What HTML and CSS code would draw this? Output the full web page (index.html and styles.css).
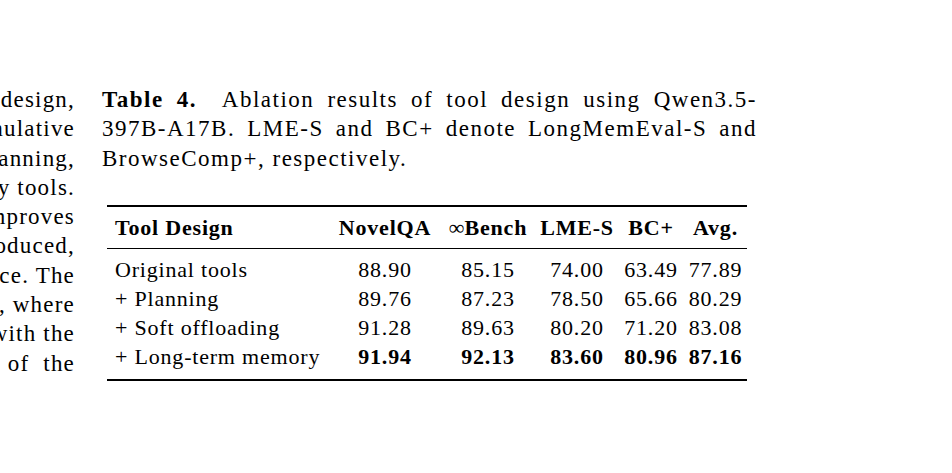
FILE: index.html
```html
<!DOCTYPE html>
<html lang="en">
	<head>
		<title>Table 4</title>
		<meta charset="UTF-8">
		<link rel="stylesheet" href="styles.css">
	</head>
	<body>
		<div id="page">
			<div id="bodyText">
				<div class="line"><span>validate the contribution of each part of our tool design,</span></div>
				<div class="line"><span>we add the components to the original tools in a cumulative</span></div>
				<div class="line"><span>manner, starting with explicit planning,</span></div>
				<div class="line"><span>followed by soft offloading and the long-term memory tools.</span></div>
				<div class="line"><span>Each component consistently improves</span></div>
				<div class="line"><span>the results. When planning is introduced,</span></div>
				<div class="line"><span>the agent keeps a stable performance. The</span></div>
				<div class="line"><span>gain is largest on BrowseComp+, where</span></div>
				<div class="line"><span>long-term memory combined with the</span></div>
				<div class="line"><span>offloading yields the best results of&nbsp; the</span></div>
			</div>
			<div id="tableCol">
				<div id="caption">
					<div class="capLine"><b>Table 4.</b>&nbsp; Ablation results of tool design using Qwen3.5-</div>
					<div class="capLine">397B-A17B. LME-S and BC+ denote LongMemEval-S and</div>
					<div>BrowseComp+, respectively.</div>
				</div>
				<table id="results">
					<colgroup>
						<col class="c1"><col class="c2"><col class="c3"><col class="c4"><col class="c5"><col class="c6">
					</colgroup>
					<thead>
						<tr>
							<th class="name">Tool Design</th>
							<th>NovelQA</th>
							<th><span class="inf">&infin;</span>Bench</th>
							<th>LME-S</th>
							<th>BC+</th>
							<th>Avg.</th>
						</tr>
					</thead>
					<tbody>
						<tr class="first">
							<td class="name">Original tools</td>
							<td>88.90</td><td>85.15</td><td>74.00</td><td>63.49</td><td>77.89</td>
						</tr>
						<tr>
							<td class="name">+ Planning</td>
							<td>89.76</td><td>87.23</td><td>78.50</td><td>65.66</td><td>80.29</td>
						</tr>
						<tr>
							<td class="name">+ Soft offloading</td>
							<td>91.28</td><td>89.63</td><td>80.20</td><td>71.20</td><td>83.08</td>
						</tr>
						<tr class="last">
							<td class="name">+ Long-term memory</td>
							<td><b>91.94</b></td><td><b>92.13</b></td><td><b>83.60</b></td><td><b>80.96</b></td><td><b>87.16</b></td>
						</tr>
					</tbody>
				</table>
			</div>
		</div>
	</body>
</html>
```

FILE: styles.css
```css
body{margin:0;background:#fff;color:#000;font-family:"Liberation Serif","DejaVu Serif",serif;font-size:22px;letter-spacing:0.8px;}
#page{display:flex;gap:27px;padding-top:85px;}

#bodyText{width:75px;overflow:hidden;line-height:29.3px;font-size:23px;letter-spacing:1.2px;}
.line{display:flex;justify-content:flex-end;white-space:nowrap;}

#tableCol{width:655px;}
#caption{line-height:29.3px;font-size:23px;letter-spacing:1.5px;}
.capLine{text-align:justify;text-align-last:justify;white-space:nowrap;}

#results{margin:32px 0 0 5px;width:640px;border-collapse:collapse;table-layout:fixed;
	border-top:2px solid #000;border-bottom:2px solid #000;}
#results thead tr{border-bottom:1.3px solid #000;}
#results th{font-weight:bold;text-align:center;padding:6px 0 6px 0;line-height:29px;}
#results th .inf{font-weight:normal;letter-spacing:0;}
#results td{text-align:center;padding:0;line-height:29px;}
#results .name{text-align:left;padding-left:8px;}
#results tr.first td{padding-top:6px;}
#results tr.last td{padding-bottom:8px;}

.c1{width:223px;}
.c2{width:110px;}
.c3{width:96px;}
.c4{width:82px;}
.c5{width:66px;}
.c6{width:63px;}
```
